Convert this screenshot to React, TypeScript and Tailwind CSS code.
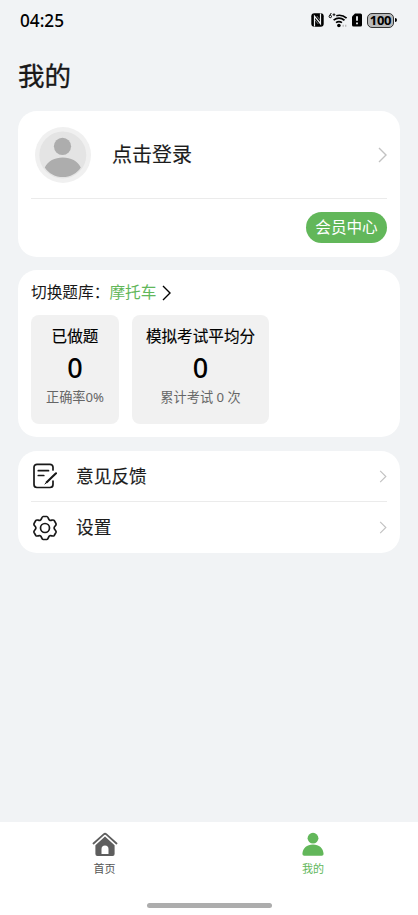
import type { ReactNode } from "react";

const GREEN = "#62b75a";

function Chevron({ className }: { className: string }) {
  return (
    <svg viewBox="0 0 9 16" fill="none" stroke="currentColor" className={className}>
      <path d="M1 1l7 7-7 7" strokeWidth="1.4" />
    </svg>
  );
}

function StatusBar() {
  return (
    <div className="flex h-10 items-center justify-between pl-5 pr-[21px] text-black">
      <span className="pt-px text-[17.2px] font-medium leading-10">04:25</span>
      <div className="flex items-center">
        {/* NFC */}
        <svg width="13" height="14" viewBox="0 0 13 14">
          <rect x="0.3" y="0.3" width="12.4" height="13.4" rx="3" fill="#000" />
          <path d="M3.5 13.500V3.200l6 7.500V0.500" fill="none" stroke="#f1f3f5" strokeWidth="1.2" />
          <path d="M5.800 3l3.500 4.300M3.800 6.700l3.500 4.300" fill="none" stroke="#f1f3f5" strokeWidth="0.500" />
        </svg>
        {/* Wi-Fi 6 */}
        <svg width="20" height="16" viewBox="0 0 20 16" className="ml-1" fill="none" stroke="#000">
          <path d="M3.300 1L1.600 3.500" strokeWidth="1" />
          <circle cx="2.300" cy="4.500" r="1.200" strokeWidth="1" />
          <path d="M6 1.300v2.800M4.600 2.700h2.800" strokeWidth="0.900" />
          <path d="M8.300 3.700c3.500-1 7.400-.1 10.300 2.500" strokeWidth="1.700" />
          <path d="M5.600 8.200c3.200-2.500 7.500-2.500 10.900 0" strokeWidth="1.700" />
          <path d="M8 10.700c1.800-1.300 4.100-1.300 6 0" strokeWidth="1.600" />
          <circle cx="10.900" cy="13.500" r="1.800" fill="#000" stroke="none" />
          <path d="M14.500 13.700h1.400M17 13.700h1.400" stroke="#bbb" strokeWidth="2" />
        </svg>
        {/* SIM alert */}
        <svg width="10" height="14" viewBox="0 0 10 14" className="ml-1">
          <path d="M3 .5h5.500A1.500 1.500 0 0 1 10 2v10a1.500 1.500 0 0 1-1.500 1.500h-7A1.500 1.500 0 0 1 0 12V3.500z" />
          <path d="M5 3.300v4.500M5 9.500v1.700" stroke="#f1f3f5" strokeWidth="1.800" />
        </svg>
        <div className="ml-[5px] flex h-[15px] w-[27px] items-center justify-center rounded-[5px] border border-[#333] bg-[#b9babb] text-[13px] font-bold leading-none tracking-tight">
          100
        </div>
        <div className="ml-px h-1 w-[2px] rounded-r-sm bg-black" />
      </div>
    </div>
  );
}

function Avatar() {
  return (
    <svg width="56" height="56" viewBox="0 0 56 56">
      <circle cx="28" cy="28" r="28" fill="#f0f0f0" />
      <circle cx="27.8" cy="28" r="23.5" fill="#e4e4e4" />
      <circle cx="27.5" cy="19.3" r="8.6" fill="#adadad" />
      <path d="M9.8 40.500c3-6.500 10-10 18-10s15 3.500 18 10c-4 6-10.600 9.600-18 9.600s-14-3.600-18-9.600z" fill="#adadad" />
    </svg>
  );
}

type StatProps = { title: string; value: number; note: string; className: string };

function StatCard({ title, value, note, className }: StatProps) {
  return (
    <div className={`flex h-[109px] flex-col items-center rounded-lg bg-[#f1f1f1] pt-[11px] ${className}`}>
      <div className="text-[15.6px] leading-5 text-black [-webkit-text-stroke:0.15px]">{title}</div>
      <div className="mt-[5px] text-[27px] font-medium leading-[34px] text-black">{value}</div>
      <div className="mt-[2px] text-[13.2px] leading-5 text-[#666]">{note}</div>
    </div>
  );
}

function MenuRow({ icon, label }: { icon: ReactNode; label: string }) {
  return (
    <div className="flex h-[51px] items-center">
      {icon}
      <span className="ml-[19px] flex-1 pb-px text-[17.7px] text-[#1c1c1c] [-webkit-text-stroke:0.15px]">{label}</span>
      <Chevron className="h-[13px] w-2 text-[#c2c2c2]" />
    </div>
  );
}

function FeedbackIcon() {
  return (
    <svg width="26" height="26" viewBox="0 0 26 26" fill="none" stroke="#181818" strokeWidth="1.7" strokeLinecap="round" className="-mt-px">
      <path d="M22 7V4.300a3 3 0 0 0-3-3H6a3 3 0 0 0-3 3v17.200a3 3 0 0 0 3 3h13a3 3 0 0 0 3-3v-3.500" />
      <path d="M7.300 7.700h10.200M7.300 12.500h5.500" />
      <path d="M25 10.300L15.700 19.200" strokeWidth="2.100" />
      <path d="M15.200 19.700l-1.200 1.300" strokeWidth="1" />
    </svg>
  );
}

function SettingsIcon() {
  return (
    <svg width="26" height="26" viewBox="0 0 26 26" fill="none" stroke="#181818" strokeWidth="1.7" strokeLinejoin="round">
      <circle cx="14" cy="13" r="4.500" />
      <path d="M12.200 1.500h3.600c1.700.2 1.400 3 2.900 3.700 1.400.8 3.400-1.200 4.500.3l1.800 3.200c.7 1.700-1.900 2.600-1.900 4.300s2.600 2.600 1.900 4.300l-1.800 3.200c-1.100 1.500-3.100-.5-4.500.3-1.500.7-1.200 3.500-2.900 3.700h-3.600c-1.700-.2-1.400-3-2.900-3.700-1.400-.8-3.400 1.200-4.500-.3L3 17.300c-.7-1.700 1.900-2.600 1.900-4.300S2.300 10.400 3 8.700l1.800-3.200c1.100-1.500 3.100.5 4.500-.3 1.500-.7 1.200-3.500 2.900-3.700z" />
    </svg>
  );
}

function BottomNav() {
  return (
    <nav className="flex h-[93px] flex-col bg-white">
      <div className="flex flex-1 pt-[10px] text-[11px] leading-4">
        <div className="flex w-1/2 flex-col items-center text-[#555]">
          <svg width="26" height="25" viewBox="0 0 26 25">
            <path d="M1.500 11.500L11.700 2.300a2 2 0 0 1 2.700 0l10.100 9.200" fill="none" stroke="#5e5e5e" strokeWidth="1.800" strokeLinecap="round" />
            <path fillRule="evenodd" d="M13 4.500l9.600 8.700v8.800a2 2 0 0 1-2 2H5.400a2 2 0 0 1-2-2v-8.800zM9.500 22h7v-5a3.500 3.500 0 0 0-7 0z" fill="#5e5e5e" />
          </svg>
          <span className="mt-[4px]">首页</span>
        </div>
        <div className="flex w-1/2 flex-col items-center pr-px text-[#62b75a]">
          <svg width="24" height="25" viewBox="0 0 24 25" fill={GREEN}>
            <circle cx="12" cy="6.200" r="5.400" />
            <path d="M1.400 22c.2-5.600 4.500-9.400 10.600-9.400S22.400 16.400 22.600 22a1.800 1.800 0 0 1-1.800 1.700H3.200A1.800 1.800 0 0 1 1.400 22z" />
          </svg>
          <span className="mt-[4px]">我的</span>
        </div>
      </div>
      <div className="mx-auto mb-[7px] h-[5px] w-[125px] rounded-full bg-[#adadad]" />
    </nav>
  );
}

export default function App() {
  return (
    <div className="flex h-[915px] w-[418px] flex-col overflow-hidden bg-[#f1f3f5] font-['Noto_Sans','Noto_Sans_CJK_SC',sans-serif]">
      <StatusBar />
      <main className="flex-1 px-[18px]">
        <h1 className="mt-[16px] text-[26.5px] leading-10 text-[#181818] [-webkit-text-stroke:0.35px]">我的</h1>

        {/* Account */}
        <section className="mt-[15px] h-[146px] rounded-[19px] bg-white px-[13px]">
          <div className="flex h-[88px] items-center border-b border-[#ebebeb] pl-1">
            <Avatar />
            <span className="ml-[21px] flex-1 text-[20px] text-[#1c1c1c] [-webkit-text-stroke:0.15px]">点击登录</span>
            <Chevron className="h-4 w-[9px] text-[#c2c2c2]" />
          </div>
          <div className="mt-[13px] flex justify-end">
            <button className="h-[31px] w-[81px] rounded-full bg-[#62b75a] text-[15.6px] leading-[31px] text-white">
              会员中心
            </button>
          </div>
        </section>

        {/* Question bank */}
        <section className="mt-[13px] h-[167px] rounded-[19px] bg-white px-[13px] pt-[13px]">
          <div className="flex h-5 items-center text-[15.7px] text-[#181818]">
            <span>切换题库：</span>
            <span className="text-[#62b75a]">摩托车</span>
            <Chevron className="ml-[5px] h-4 w-[9px] text-black" />
          </div>
          <div className="mt-3 flex gap-[13px]">
            <StatCard title="已做题" value={0} note="正确率0%" className="w-[88px]" />
            <StatCard title="模拟考试平均分" value={0} note="累计考试 0 次" className="w-[137px]" />
          </div>
        </section>

        <section className="mt-[14px] h-[102px] rounded-[19px] bg-white px-[13px]">
          <MenuRow icon={<FeedbackIcon />} label="意见反馈" />
          <div className="-mt-px h-px bg-[#ebebeb]" />
          <MenuRow icon={<SettingsIcon />} label="设置" />
        </section>
      </main>
      <BottomNav />
    </div>
  );
}
